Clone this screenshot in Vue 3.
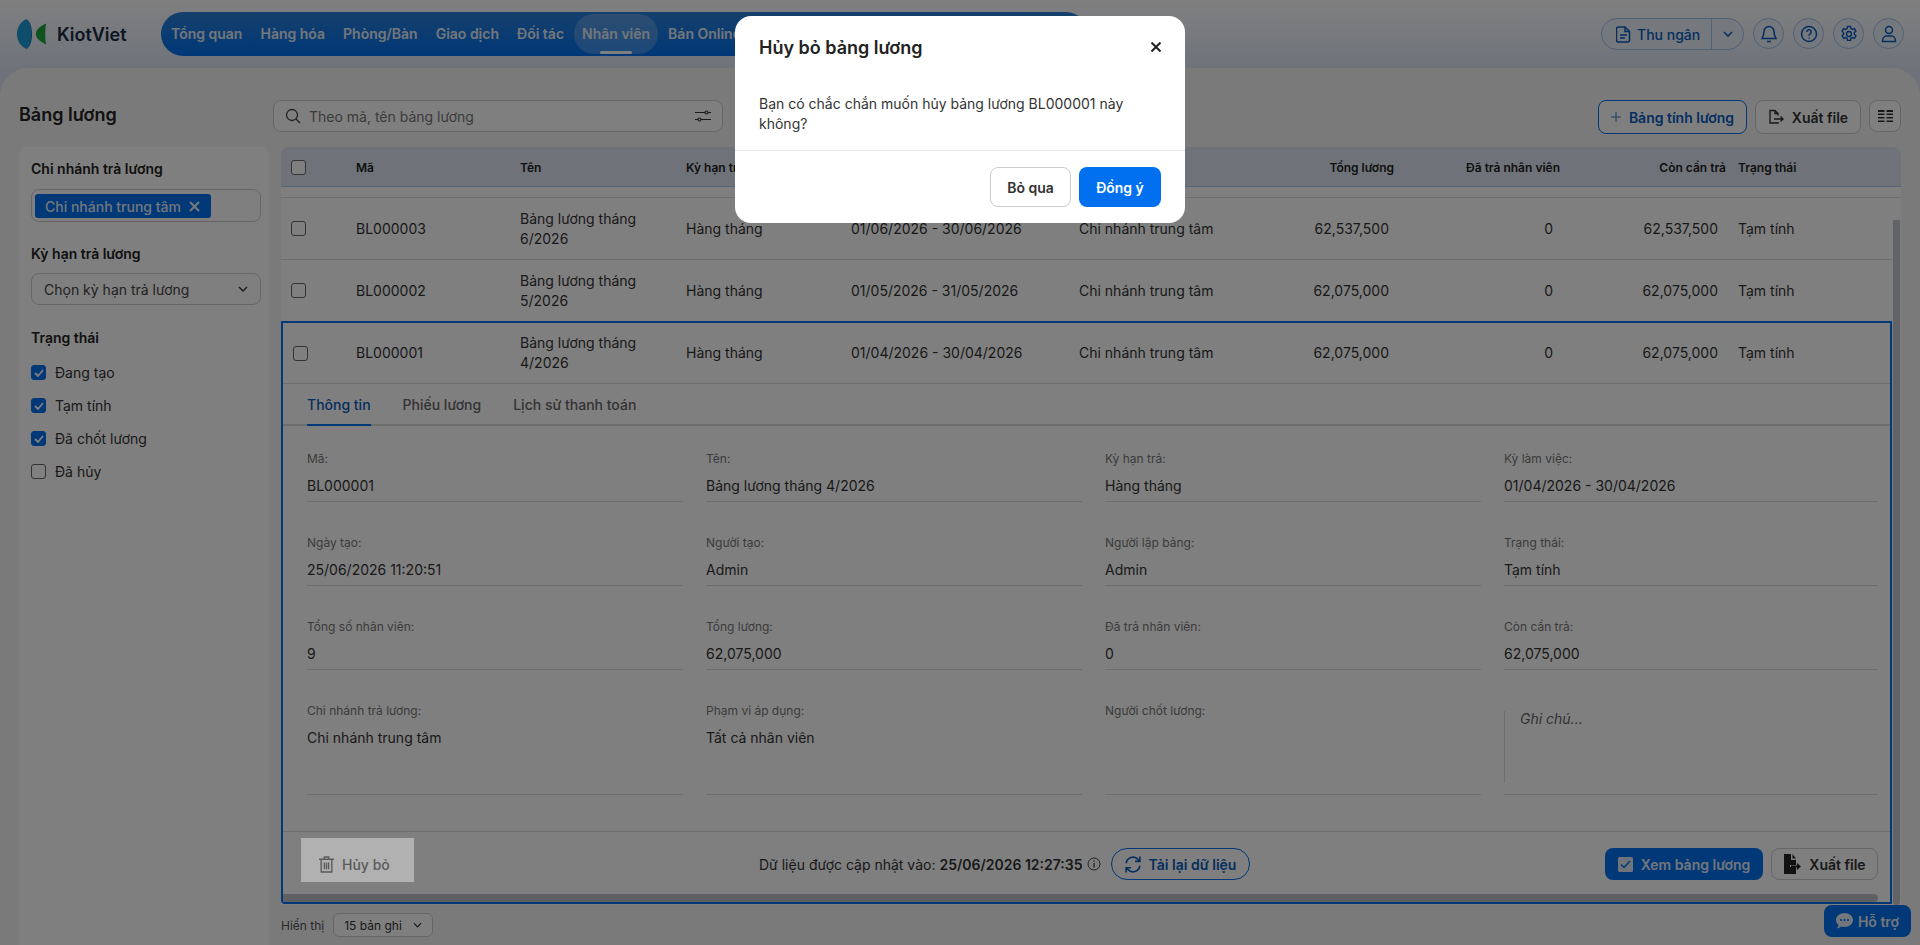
<template>
  <div class="page">
    <header class="topbar">
      <div class="logo">
        <svg width="34" height="34" viewBox="0 0 36 34">
          <path d="M11 1C3 5 1 12 1 17s2 12 10 16c3-3 5-9 5-16S14 4 11 1z" fill="#1e9bd8" />
          <path d="M11 1c3 3 5 10 5 16s-2 13-5 16c4-2 6-9 6-16S15 3 11 1z" fill="#0b6fb8" />
          <path d="M32 6c-7 3-11 7-11 11s4 8 11 11c-1-3-1-7-1-11s0-8 1-11z" fill="#1ca63a" />
        </svg>
        <span class="logo-text">KiotViet</span>
      </div>
      <nav class="nav">
        <a v-for="item in navItems" :key="item" class="nav-item" :class="{ active: item === 'Nhân viên' }">{{ item }}</a>
      </nav>
      <div class="top-actions">
        <div class="cashier">
          <span class="cashier-main">
            <svg width="15" height="17" viewBox="0 0 15 17" fill="none" stroke="currentColor" stroke-width="1.5"><path d="M2.5 1h6.5l4.5 4.5V14a2 2 0 0 1-2 2h-9a2 2 0 0 1-2-2V3a2 2 0 0 1 2-2z" /><path d="M9 1v4.5h4.5M4 9h7M4 12h5" /></svg>
            Thu ngân
          </span>
          <span class="cashier-arrow">
            <svg width="10" height="6" viewBox="0 0 10 6" fill="none" stroke="currentColor" stroke-width="1.6"><path d="M1 1l4 4 4-4" /></svg>
          </span>
        </div>
        <span class="round-btn">
          <svg width="16" height="18" viewBox="0 0 16 18" fill="none" stroke="currentColor" stroke-width="1.5"><path d="M8 1.5a5 5 0 0 0-5 5c0 4-1.500 5.500-2 7h14c-.5-1.500-2-3-2-7a5 5 0 0 0-5-5zM6 16.500h4" /></svg>
        </span>
        <span class="round-btn">
          <svg width="18" height="18" viewBox="0 0 18 18" fill="none" stroke="currentColor" stroke-width="1.5"><circle cx="9" cy="9" r="7.500" /><path d="M6.800 7a2.200 2.200 0 1 1 3.300 1.900C9.300 9.400 9 9.800 9 10.700M9 12.500v1" /></svg>
        </span>
        <span class="round-btn">
          <svg width="18" height="18" viewBox="0 0 18 18" fill="none" stroke="currentColor" stroke-width="1.4"><path d="M7.500 1.500h3l.4 2.100 1.500.8 2-.8 1.500 2.600-1.600 1.400v1.700l1.600 1.400-1.500 2.600-2-.8-1.500.8-.4 2.100h-3l-.4-2.100-1.500-.8-2 .8-1.500-2.600 1.600-1.400V8.200L2.100 6.200l1.500-2.600 2 .8 1.500-.8z" /><circle cx="9" cy="9" r="2.500" /></svg>
        </span>
        <span class="round-btn">
          <svg width="16" height="18" viewBox="0 0 16 18" fill="none" stroke="currentColor" stroke-width="1.5"><circle cx="8" cy="5" r="3.500" /><path d="M1.500 16c0-3 2-5 4-5h5c2 0 4 2 4 5v.5h-13z" /></svg>
        </span>
      </div>
    </header>

    <main class="main-card">
      <div class="toolbar">
        <h1 class="page-title">Bảng lương</h1>
        <div class="search">
          <svg width="16" height="16" viewBox="0 0 16 16" fill="none" stroke="#444" stroke-width="1.300"><circle cx="7" cy="7" r="5.500" /><path d="M11 11l4 4" /></svg>
          <span class="search-text">Theo mã, tên bảng lương</span>
          <svg width="16" height="14" viewBox="0 0 16 14" fill="none" stroke="#333" stroke-width="1.200"><path d="M0 3.500h10M13 3.500h3M0 10.500h3M6 10.500h10" /><circle cx="11.500" cy="3.500" r="1.500" /><circle cx="4.500" cy="10.500" r="1.500" /></svg>
        </div>
        <div class="toolbar-right">
          <button class="btn btn-outline-blue">
            <svg width="10" height="10" viewBox="0 0 10 10" stroke="currentColor" stroke-width="1" opacity="0.8"><path d="M5 0v10M0 5h10" /></svg>
            Bảng tính lương
          </button>
          <button class="btn btn-plain">
            <svg width="16" height="16" viewBox="0 0 16 16" fill="none" stroke="currentColor" stroke-width="1.400"><path d="M10 13v1H2V1.500h5L10 4.500v2M7 1.500v3h3M6 10h9M12.500 7.500L15 10l-2.500 2.500" /></svg>
            Xuất file
          </button>
          <button class="btn btn-icon">
            <svg width="15" height="13" viewBox="0 0 15 13" fill="#333"><rect width="6.500" height="2" /><rect x="8.500" width="6.500" height="2" /><rect y="3.500" width="6.500" height="1.500" /><rect x="8.500" y="3.500" width="6.500" height="1.500" /><rect y="7" width="6.500" height="1.500" /><rect x="8.500" y="7" width="6.500" height="1.500" /><rect y="10.500" width="6.500" height="1.500" /><rect x="8.500" y="10.500" width="6.500" height="1.500" /></svg>
          </button>
        </div>
      </div>

      <div class="content">
        <aside class="sidebar">
          <div class="filter-title">Chi nhánh trả lương</div>
          <div class="tag-box">
            <span class="tag">Chi nhánh trung tâm
              <svg width="11" height="11" viewBox="0 0 11 11" stroke="currentColor" stroke-width="2.200"><path d="M1 1l9 9M10 1l-9 9" /></svg>
            </span>
          </div>
          <div class="filter-title second">Kỳ hạn trả lương</div>
          <div class="select-box">
            Chọn kỳ hạn trả lương
            <svg width="10" height="6" viewBox="0 0 10 6" fill="none" stroke="#333" stroke-width="1.400"><path d="M1 1l4 4 4-4" /></svg>
          </div>
          <div class="filter-title third">Trạng thái</div>
          <label v-for="s in statuses" :key="s.label" class="status-item">
            <span class="check" :class="{ checked: s.checked }">
              <svg v-if="s.checked" width="10" height="8" viewBox="0 0 10 8" fill="none" stroke="#fff" stroke-width="1.800"><path d="M1 4l3 3 5-6" /></svg>
            </span>
            {{ s.label }}
          </label>
        </aside>

        <section class="table-area">
          <div class="table">
            <div class="table-head">
              <span class="check-cell"><span class="check"></span></span>
              <span>Mã</span>
              <span>Tên</span>
              <span>Kỳ hạn trả</span>
              <span>Kỳ làm việc</span>
              <span>Chi nhánh</span>
              <span class="num">Tổng lương</span>
              <span class="num">Đã trả nhân viên</span>
              <span class="num">Còn cần trả</span>
              <span></span>
              <span>Trạng thái</span>
            </div>
            <div class="gap-row"></div>
            <div v-for="row in rows" :key="row.code" class="table-row">
              <span class="check-cell"><span class="check"></span></span>
              <span>{{ row.code }}</span>
              <span>{{ row.name }}</span>
              <span>Hàng tháng</span>
              <span>{{ row.period }}</span>
              <span>Chi nhánh trung tâm</span>
              <span class="num">{{ row.total }}</span>
              <span class="num">0</span>
              <span class="num">{{ row.total }}</span>
              <span></span>
              <span>Tạm tính</span>
            </div>

            <div class="detail-frame">
              <div class="table-row inner">
                <span class="check-cell"><span class="check"></span></span>
                <span>BL000001</span>
                <span>Bảng lương tháng 4/2026</span>
                <span>Hàng tháng</span>
                <span>01/04/2026 - 30/04/2026</span>
                <span>Chi nhánh trung tâm</span>
                <span class="num">62,075,000</span>
                <span class="num">0</span>
                <span class="num">62,075,000</span>
                <span></span>
                <span>Tạm tính</span>
              </div>
              <div class="tabs">
                <span v-for="(t, i) in tabs" :key="t" class="tab" :class="{ active: i === 0 }">{{ t }}</span>
              </div>
              <div class="fields">
                <div v-for="f in fields" :key="f.label" class="field">
                  <div class="field-label">{{ f.label }}</div>
                  <div class="field-value">{{ f.value }}</div>
                </div>
                <div v-for="f in lastFields" :key="f.label" class="field tall">
                  <div class="field-label">{{ f.label }}</div>
                  <div class="field-value">{{ f.value }}</div>
                </div>
                <div class="field note">
                  <div class="note-text">Ghi chú...</div>
                </div>
              </div>
              <div class="detail-footer">
                <button class="cancel-btn">
                  <svg width="15" height="17" viewBox="0 0 14 16" fill="none" stroke="currentColor" stroke-width="1.300"><path d="M0 3h14M5 3V1h4v2M2 3v12h10V3M5 6v6.500M7 6v6.500M9 6v6.500" /></svg>
                  Hủy bỏ
                </button>
                <div class="update-info">
                  <span>Dữ liệu được cập nhật vào: <b>25/06/2026 12:27:35</b></span>
                  <svg width="14" height="14" viewBox="0 0 14 14" fill="none" stroke="#444"><circle cx="7" cy="7" r="6" /><path d="M7 6v4.500M7 3.500v1.200" stroke-width="1.300" /></svg>
                  <button class="reload-btn">
                    <svg width="18" height="19" viewBox="0 0 17 18" fill="none" stroke="currentColor" stroke-width="1.500"><path d="M2 8a6.500 6.500 0 0 1 11.500-3.500L15 6M15 1.500V6h-4.500M15 10a6.500 6.500 0 0 1-11.500 3.500L2 12M2 16.500V12h4.500" /></svg>
                    Tải lại dữ liệu
                  </button>
                </div>
                <div class="detail-actions">
                  <button class="btn-solid">
                    <svg width="15" height="15" viewBox="0 0 15 15"><rect width="15" height="15" rx="1.500" fill="#dfe8f5" /><path d="M3 7.500l3 3 6-6.500" fill="none" stroke="#0070f0" stroke-width="1.500" /></svg>
                    Xem bảng lương
                  </button>
                  <button class="btn-export">
                    <svg width="18" height="20" viewBox="0 0 18 20" fill="#222"><path d="M1 0h7v6h5v5H7v2h6v7H1zM9.500 0L13 4.500H9.500zM8 11.500h6V9l4 3.500-4 3.500v-2.500H8z" /></svg>
                    Xuất file
                  </button>
                </div>
              </div>
              <div class="h-scroll"></div>
            </div>
            <div class="v-scroll"></div>
          </div>
          <div class="pager">
            <span>Hiển thị</span>
            <span class="page-size">15 bản ghi
              <svg width="9" height="6" viewBox="0 0 10 6" fill="none" stroke="#333" stroke-width="1.300"><path d="M1 1l4 4 4-4" /></svg>
            </span>
          </div>
        </section>
      </div>
    </main>

    <button class="support">
      <svg width="17" height="16" viewBox="0 0 17 16"><path d="M8.500 0C3.800 0 0 3 0 6.900c0 2 1 3.700 2.600 5-.2 1.300-1 2.500-1.900 3.400 1.800 0 3.400-.8 4.500-1.800 1 .3 2.100.4 3.300.4 4.700 0 8.500-3.100 8.500-7S13.200 0 8.500 0z" fill="#e6edf7" /><circle cx="5" cy="7" r="1.100" fill="#0070f0" /><circle cx="8.500" cy="7" r="1.100" fill="#0070f0" /><circle cx="12" cy="7" r="1.100" fill="#0070f0" /></svg>
      Hỗ trợ
    </button>

    <div class="overlay"></div>

    <div class="modal">
      <div class="modal-head">
        <span class="modal-title">Hủy bỏ bảng lương</span>
        <svg width="10" height="10" viewBox="0 0 10 10" stroke="#222" stroke-width="2"><path d="M.5.5l9 9M9.500.5l-9 9" /></svg>
      </div>
      <div class="modal-body">Bạn có chắc chắn muốn hủy bảng lương BL000001 này không?</div>
      <div class="modal-foot">
        <button class="modal-skip">Bỏ qua</button>
        <button class="modal-ok">Đồng ý</button>
      </div>
    </div>
  </div>
</template>

<script setup>
const navItems = ['Tổng quan', 'Hàng hóa', 'Phòng/Bàn', 'Giao dịch', 'Đối tác', 'Nhân viên', 'Bán Online']

const statuses = [
  { label: 'Đang tạo', checked: true },
  { label: 'Tạm tính', checked: true },
  { label: 'Đã chốt lương', checked: true },
  { label: 'Đã hủy', checked: false }
]

const rows = [
  { code: 'BL000003', name: 'Bảng lương tháng 6/2026', period: '01/06/2026 - 30/06/2026', total: '62,537,500' },
  { code: 'BL000002', name: 'Bảng lương tháng 5/2026', period: '01/05/2026 - 31/05/2026', total: '62,075,000' }
]

const tabs = ['Thông tin', 'Phiếu lương', 'Lịch sử thanh toán']

const fields = [
  { label: 'Mã:', value: 'BL000001' },
  { label: 'Tên:', value: 'Bảng lương tháng 4/2026' },
  { label: 'Kỳ hạn trả:', value: 'Hàng tháng' },
  { label: 'Kỳ làm việc:', value: '01/04/2026 - 30/04/2026' },
  { label: 'Ngày tạo:', value: '25/06/2026 11:20:51' },
  { label: 'Người tạo:', value: 'Admin' },
  { label: 'Người lập bảng:', value: 'Admin' },
  { label: 'Trạng thái:', value: 'Tạm tính' },
  { label: 'Tổng số nhân viên:', value: '9' },
  { label: 'Tổng lương:', value: '62,075,000' },
  { label: 'Đã trả nhân viên:', value: '0' },
  { label: 'Còn cần trả:', value: '62,075,000' }
]

const lastFields = [
  { label: 'Chi nhánh trả lương:', value: 'Chi nhánh trung tâm' },
  { label: 'Phạm vi áp dụng:', value: 'Tất cả nhân viên' },
  { label: 'Người chốt lương:', value: '' }
]
</script>

<style>
html, body {
  margin: 0;
  overflow: hidden;
}
</style>

<style scoped>
* {
  box-sizing: border-box;
}
.page {
  width: 1920px;
  height: 945px;
  overflow: hidden;
  background: linear-gradient(180deg, #fff 0, #dde6f5 70px);
  font-family: Inter, "Noto Sans", "Liberation Sans", sans-serif;
  font-size: 14px;
  color: #222;
}
button {
  font-family: inherit;
  cursor: pointer;
}

/* top bar */
.topbar {
  height: 68px;
  display: flex;
  align-items: flex-start;
  padding: 12px 16px 0 16px;
}
.logo {
  display: flex;
  align-items: center;
  gap: 7px;
  width: 145px;
  margin-top: 5px;
}
.logo-text {
  font-size: 18px;
  font-weight: 600;
  color: #1a2b45;
}
.nav {
  width: 927px;
  height: 44px;
  display: flex;
  align-items: flex-start;
  gap: 2px;
  padding: 2px;
  border-radius: 22px;
  background: linear-gradient(180deg, #2b7fd8, #0070f0);
  overflow: hidden;
}
.nav-item {
  height: 40px;
  line-height: 40px;
  padding: 0 8px;
  border-radius: 20px;
  color: #e6edf7;
  font-weight: 600;
  font-size: 14px;
  white-space: nowrap;
  position: relative;
}
.nav-item.active {
  background: rgba(255, 255, 255, 0.22);
}
.nav-item.active::after {
  content: "";
  position: absolute;
  left: 26px;
  bottom: 0;
  width: 32px;
  height: 3px;
  background: #fff;
  border-radius: 2px;
}
.top-actions {
  margin-left: auto;
  margin-top: 6px;
  display: flex;
  gap: 9px;
  color: #0a5cc0;
}
.cashier {
  display: flex;
  width: 143px;
  height: 32px;
  border: 1px solid #9fc2ec;
  border-radius: 16px;
  background: #eaf1fb;
}
.cashier-main {
  flex: 1;
  display: flex;
  align-items: center;
  gap: 6px;
  padding-left: 14px;
  font-weight: 500;
  border-right: 1px solid #9fc2ec;
}
.cashier-arrow {
  width: 31px;
  display: flex;
  align-items: center;
  justify-content: center;
}
.round-btn {
  width: 31px;
  height: 31px;
  border: 1px solid #9fc2ec;
  border-radius: 50%;
  background: #eaf1fb;
  display: flex;
  align-items: center;
  justify-content: center;
}

/* main */
.main-card {
  height: 877px;
  background: #f4f5f5;
  border-radius: 28px 28px 0 0;
  padding: 32px 19px 0;
}
.toolbar {
  display: flex;
  align-items: flex-start;
  height: 47px;
}
.page-title {
  width: 254px;
  margin: 0;
  font-size: 18px;
  font-weight: 600;
  line-height: 30px;
}
.search {
  width: 450px;
  height: 32px;
  display: flex;
  align-items: center;
  gap: 9px;
  padding: 0 11px;
  background: #fff;
  border: 1px solid #ccc;
  border-radius: 8px;
}
.search-text {
  flex: 1;
  color: #777;
  margin-left: -1px;
}
.toolbar-right {
  margin-left: auto;
  display: flex;
  gap: 8px;
}
.btn {
  height: 34px;
  display: flex;
  align-items: center;
  justify-content: center;
  gap: 8px;
  border-radius: 8px;
  font-size: 14px;
  background: #fff;
}
.btn-outline-blue {
  width: 149px;
  border: 1px solid #0070f0;
  color: #0a5cc0;
  font-weight: 600;
}
.btn-plain {
  width: 106px;
  border: 1px solid #ccc;
  color: #333;
  font-weight: 600;
}
.btn-icon {
  width: 32px;
  height: 32px;
  border: 1px solid #ccc;
}
.content {
  display: flex;
  gap: 12px;
}

/* sidebar */
.sidebar {
  width: 250px;
  height: 798px;
  flex-shrink: 0;
  background: #fff;
  border-radius: 8px 8px 0 0;
  padding: 12px 8px 0 12px;
}
.filter-title {
  font-weight: 600;
  line-height: 20px;
  color: #222;
}
.filter-title.second {
  margin-top: 22px;
}
.filter-title.third {
  margin-top: 23px;
}
.tag-box {
  margin-top: 10px;
  height: 33px;
  border: 1px solid #ccc;
  border-radius: 8px;
  padding: 4px 3px;
}
.tag {
  display: inline-flex;
  align-items: center;
  gap: 8px;
  height: 24px;
  padding: 0 11px 0 10px;
  background: #0070f0;
  border-radius: 3px;
  color: #e6edf7;
  font-weight: 500;
}
.select-box {
  margin-top: 9px;
  height: 32px;
  display: flex;
  align-items: center;
  justify-content: space-between;
  border: 1px solid #ccc;
  border-radius: 8px;
  padding: 0 12px;
  color: #444;
}
.status-item {
  display: flex;
  align-items: center;
  gap: 9px;
  height: 33px;
  color: #333;
}
.filter-title.third + .status-item {
  margin-top: 8px;
}
.check {
  width: 15px;
  height: 15px;
  border: 1px solid #666;
  border-radius: 3px;
  background: #fff;
  display: inline-flex;
  align-items: center;
  justify-content: center;
  flex-shrink: 0;
}
.check.checked {
  background: #0070f0;
  border-color: #0070f0;
}

/* table */
.table-area {
  width: 1620px;
}
.table {
  position: relative;
  height: 758px;
  background: #fff;
  border-radius: 8px 8px 0 0;
}
.table-head,
.table-row {
  display: grid;
  align-items: center;
}
.table-head {
  height: 40px;
  padding-top: 1px;
  grid-template-columns: 75px 164px 166px 165px 228px 200px 115px 166px 166px 12px 1fr;
  background: #dee6f2;
  border-bottom: 1px solid #a9c8ee;
  border-radius: 8px 8px 0 0;
  font-size: 12px;
  font-weight: 600;
  color: #222;
}
.gap-row {
  height: 11px;
  border-bottom: 1px solid #ddd;
}
.table-row {
  width: 1611px;
  height: 62px;
  grid-template-columns: 75px 164px 166px 165px 228px 200px 110px 164px 165px 20px 1fr;
  border-bottom: 1px solid #ddd;
  line-height: 20px;
  color: #333;
}
.table-row.inner {
  width: auto;
  height: 61px;
  grid-template-columns: 73px 164px 166px 165px 228px 200px 110px 164px 165px 20px 1fr;
}
.check-cell {
  padding-left: 10px;
  display: flex;
}
.num {
  text-align: right;
}
.detail-frame {
  position: relative;
  width: 1611px;
  height: 583px;
  border: 2px solid #0070f0;
  border-radius: 0 0 0 4px;
  margin-top: -1px;
}
.tabs {
  height: 42px;
  display: flex;
  gap: 32px;
  padding-left: 24px;
  border-bottom: 2px solid #ddd;
}
.tab {
  height: 42px;
  line-height: 42px;
  color: #666;
  font-weight: 500;
}
.tab.active {
  color: #0a5cc0;
  border-bottom: 2px solid #0070f0;
}
.fields {
  display: grid;
  grid-template-columns: repeat(3, 376px) 374px;
  align-content: start;
  column-gap: 23px;
  padding: 23px 0 0 24px;
  height: 406px;
  border-bottom: 1px solid #ddd;
}
.field {
  height: 84px;
}
.field-label {
  font-size: 12px;
  line-height: 20px;
  color: #777;
}
.field-value {
  margin-top: 7px;
  line-height: 20px;
  height: 26px;
  border-bottom: 1px solid #ddd;
  color: #333;
}
.field.tall .field-value {
  height: 67px;
}
.note {
  position: relative;
  height: 94px;
  padding-top: 8px;
  border-bottom: 1px solid #ddd;
}
.note::before {
  content: "";
  position: absolute;
  left: 0;
  top: 10px;
  height: 72px;
  border-left: 1px solid #ddd;
}
.note-text {
  padding-left: 16px;
  line-height: 20px;
  font-style: italic;
  color: #666;
}
.detail-footer {
  position: relative;
  height: 65px;
  padding: 16px 12px 0 0;
  display: flex;
  align-items: flex-start;
}
.cancel-btn {
  position: relative;
  z-index: 20;
  width: 113px;
  height: 44px;
  margin: -10px 0 0 18px;
  display: flex;
  align-items: center;
  gap: 8px;
  padding: 8px 0 0 18px;
  border: none;
  background: #b1b1b1;
  color: #5a5a5a;
  font-size: 14px;
  font-weight: 500;
}
.update-info {
  position: absolute;
  left: 476px;
  top: 16px;
  display: flex;
  align-items: center;
  gap: 4px;
  height: 32px;
  white-space: nowrap;
  color: #333;
}
.update-info b {
  font-weight: 600;
}
.reload-btn {
  width: 139px;
  height: 32px;
  margin-left: 6px;
  display: flex;
  align-items: center;
  justify-content: center;
  gap: 7px;
  background: #fff;
  border: 1px solid #0070f0;
  border-radius: 16px;
  color: #0a5cc0;
  font-size: 14px;
  font-weight: 600;
}
.detail-actions {
  margin-left: auto;
  display: flex;
  gap: 8px;
}
.btn-solid {
  width: 158px;
  height: 32px;
  display: flex;
  align-items: center;
  justify-content: center;
  gap: 8px;
  background: #0070f0;
  border: none;
  border-radius: 8px;
  color: #e6edf7;
  font-size: 14px;
  font-weight: 600;
}
.btn-export {
  width: 107px;
  height: 32px;
  display: flex;
  align-items: center;
  justify-content: center;
  gap: 8px;
  background: #fff;
  border: 1px solid #ccc;
  border-radius: 8px;
  color: #333;
  font-size: 14px;
  font-weight: 600;
}
.h-scroll {
  position: absolute;
  left: 0;
  right: 12px;
  bottom: 0;
  height: 8px;
  border-radius: 0 4px 4px 0;
  background: #bfc1c8;
}
.v-scroll {
  position: absolute;
  left: 1612px;
  top: 73px;
  width: 7px;
  height: 685px;
  border-radius: 0 0 4px 4px;
  background: #c5c6cc;
}
.pager {
  margin-top: 8px;
  display: flex;
  align-items: center;
  gap: 9px;
  font-size: 12px;
  color: #555;
}
.page-size {
  width: 100px;
  height: 24px;
  display: flex;
  align-items: center;
  justify-content: space-between;
  padding: 0 10px;
  background: #fff;
  border: 1px solid #ccc;
  border-radius: 6px;
  color: #333;
}
.support {
  position: fixed;
  right: 9px;
  bottom: 8px;
  width: 87px;
  height: 32px;
  display: flex;
  align-items: center;
  justify-content: center;
  gap: 5px;
  background: #0070f0;
  border: none;
  border-radius: 8px;
  color: #e6edf7;
  font-size: 14px;
  font-weight: 600;
}

/* confirm dialog */
.overlay {
  position: fixed;
  inset: 0;
  z-index: 10;
  background: rgba(0, 0, 0, 0.5);
}
.modal {
  position: fixed;
  z-index: 30;
  left: 735px;
  top: 16px;
  width: 450px;
  height: 207px;
  background: #fff;
  border-radius: 16px;
  color: #222;
}
.modal-head {
  height: 62px;
  display: flex;
  align-items: center;
  justify-content: space-between;
  padding: 0 24px;
  margin-bottom: 14px;
}
.modal-title {
  font-size: 18px;
  font-weight: 600;
}
.modal-body {
  height: 59px;
  padding: 2px 24px 18px;
  line-height: 20px;
  color: #333;
  border-bottom: 1px solid #e6e6e6;
}
.modal-foot {
  display: flex;
  justify-content: flex-end;
  gap: 8px;
  padding: 16px 24px 0;
}
.modal-skip,
.modal-ok {
  height: 40px;
  border-radius: 8px;
  font-size: 14px;
  font-weight: 600;
}
.modal-skip {
  width: 81px;
  background: #fff;
  border: 1px solid #ccc;
  color: #333;
}
.modal-ok {
  width: 82px;
  background: #0070f0;
  border: none;
  color: #fff;
}
</style>
